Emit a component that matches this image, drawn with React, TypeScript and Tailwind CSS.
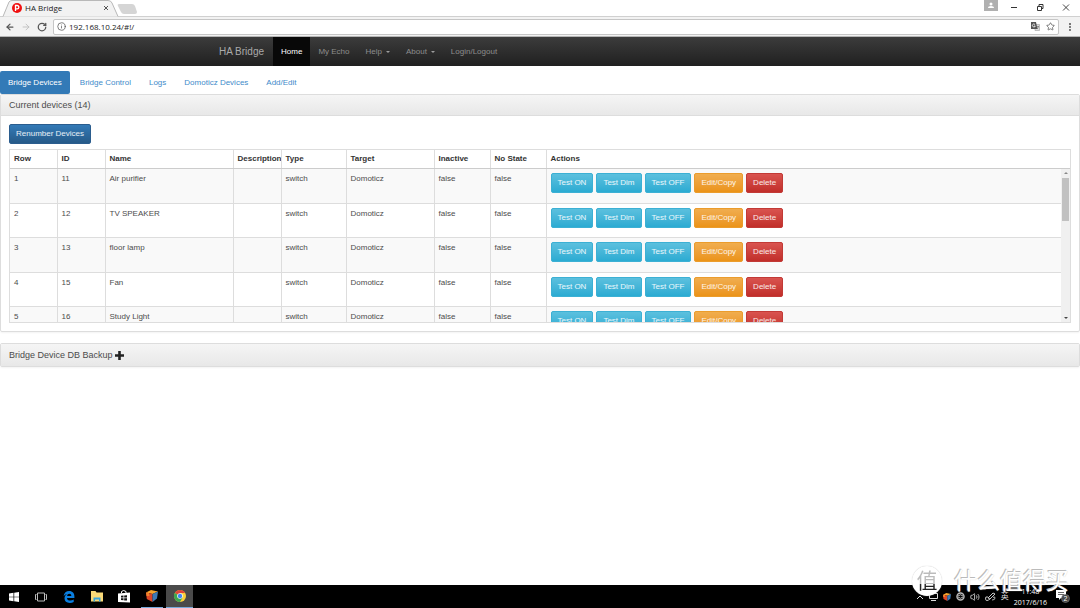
import type { ReactNode } from "react";
import { ArrowLeft, ArrowRight, Info, MoreVertical, RotateCw, Star, Volume2 } from "lucide-react";

const devices = [
  { id: 11, name: "Air purifier" },
  { id: 12, name: "TV SPEAKER" },
  { id: 13, name: "floor lamp" },
  { id: 15, name: "Fan" },
  { id: 16, name: "Study Light" },
];

const columns = [
  { label: "Row", width: "w-[47px]" },
  { label: "ID", width: "w-12" },
  { label: "Name", width: "w-32" },
  { label: "Description", width: "w-12" },
  { label: "Type", width: "w-[65px]" },
  { label: "Target", width: "w-[88px]" },
  { label: "Inactive", width: "w-14" },
  { label: "No State", width: "w-14" },
  { label: "Actions", width: "" },
];

const info = "border-[#3cb0d4] from-[#5bc0de] to-[#2aabd2]";
const actions = [
  { label: "Test ON", look: info },
  { label: "Test Dim", look: info },
  { label: "Test OFF", look: info },
  { label: "Edit/Copy", look: "border-[#eb9c2c] from-[#f0ad4e] to-[#eb9316]" },
  { label: "Delete", look: "border-[#c23a36] from-[#d9534f] to-[#c12e2a]" },
];

function Button({ look, children }: { look: string; children: ReactNode }) {
  return (
    <button type="button" className={`h-5 shrink-0 rounded-[2px] border bg-linear-to-b px-[6px] text-white/90 ${look}`}>
      {children}
    </button>
  );
}

function Browser() {
  return (
    <header className="font-['Open_Sans','Noto_Sans',sans-serif] text-[8px] text-[#222]">
      <div className="relative flex h-4 items-end bg-white">
        <svg className="absolute left-0 top-0" width="140" height="17" viewBox="0 0 140 17">
          <path d="M3 16.5 9 2Q10 .5 12 .5H108Q111 .5 112 3L118 16.5" fill="#f2f2f2" stroke="#b8b8b8" />
          <path d="M119 4H132Q134 4 135 6L137 12Q137 14 135 14H124Q122 14 121 12L118 6Q117 4 119 4" fill="#d5d5d5" />
        </svg>
        <div className="relative flex h-4 w-28 items-center gap-[3px] pl-3">
          <svg width="10" height="10" viewBox="0 0 10 10">
            <circle cx="5" cy="5" r="5" fill="#f01010" />
            <path d="M3.5 8V2.5H5.2a1.6 1.6 0 0 1 0 3.3H3.7" fill="none" stroke="#fff" strokeWidth="1.3" />
          </svg>
          <span className="grow">HA Bridge</span>
          <button type="button" aria-label="Close tab" className="mr-[3px]">
            <svg width="6" height="6" viewBox="0 0 6 6" stroke="#555">
              <path d="M1 1 5 5M5 1 1 5" />
            </svg>
          </button>
        </div>
        <div className="ml-auto flex h-4 items-start">
          <button type="button" aria-label="Profile" className="mr-3 flex h-[11px] w-[14px] items-center justify-center bg-[#b0b0b0]">
            <svg width="6" height="7" viewBox="0 0 6 7" fill="#fff">
              <circle cx="3" cy="2" r="1.5" />
              <path d="M0 6Q0 4 3 4T6 6Z" />
            </svg>
          </button>
          <svg className="mt-[3px]" width="70" height="9" viewBox="0 0 70 9" fill="none" stroke="#333">
            <path d="M1 4.5H7" />
            <path d="M27.500 3.500H31.500V7.500H27.500ZM29 3V1.500H33V5.500H32" />
            <path d="M53 1.500 59 7.500M59 1.500 53 7.500" strokeWidth=".9" />
          </svg>
        </div>
      </div>
      <div className="flex h-[21px] items-center gap-[6px] border-b border-[#b5b5b5] border-t border-t-[#d0d0d0] bg-[#f2f2f2] px-[5px]">
        <button type="button" aria-label="Back"><ArrowLeft size={10} strokeWidth={3} color="#555" /></button>
        <button type="button" aria-label="Forward"><ArrowRight size={10} strokeWidth={2} color="#bbb" /></button>
        <button type="button" aria-label="Reload"><RotateCw size={10} strokeWidth={3} color="#555" /></button>
        <div className="flex h-4 grow items-center gap-[3px] rounded-[2px] border border-[#c6c6c6] bg-white px-[3px]">
          <Info size={9} color="#555" />
          <input aria-label="Address" className="min-w-0 grow outline-none" defaultValue="192.168.10.24/#!/" />
          <svg width="9" height="9" viewBox="0 0 9 9" fill="none">
            <path d="M4 2.500H8.500V8.500H4Z" fill="#ddd" stroke="#aaa" strokeWidth=".7" />
            <path d="M0 0H5L6.500 7H0Z" fill="#555" />
            <path d="M4 2.500A1.500 1.500 0 1 0 4.300 4H3" stroke="#fff" strokeWidth=".8" />
            <path d="M5.800 4.500H8M7.500 4.500 6.300 7" stroke="#666" strokeWidth=".6" />
          </svg>
          <Star size={9} color="#555" strokeWidth={2} className="ml-[3px]" />
        </div>
        <button type="button" aria-label="Menu"><MoreVertical size={10} color="#555" strokeWidth={3} /></button>
      </div>
    </header>
  );
}

function Caret() {
  return <span className="ml-1 mt-px inline-block border-x-2 border-t-2 border-x-transparent border-t-[#9d9d9d] align-middle" />;
}

function Navbar() {
  return (
    <nav className="flex h-[29px] items-center bg-linear-to-b from-[#3c3c3c] to-[#202020] pl-[219px] text-[#8d8d8d]">
      <a href="#home" className="mr-[9px] text-[10px] text-[#aaa]">HA Bridge</a>
      <a href="#home" className="flex h-full items-center bg-[#080808] px-2 text-white">Home</a>
      <a href="#echo" className="px-2">My Echo</a>
      <a href="#help" className="px-2">Help<Caret /></a>
      <a href="#about" className="px-2">About<Caret /></a>
      <a href="#login" className="px-2">Login/Logout</a>
    </nav>
  );
}

function DeviceTable() {
  return (
    <div className="relative mt-[5px] border border-[#ddd]">
      <table className="block w-full text-left">
        <thead className="block border-b border-[#ccc] text-[#333]">
          <tr className="table h-[18px] w-full table-fixed">
            {columns.map((c) => (
              <th key={c.label} className={`overflow-hidden border-l border-[#ddd] pl-1 first:border-l-0 ${c.width}`}>
                {c.label}
              </th>
            ))}
          </tr>
        </thead>
        <tbody className="block h-[153px] overflow-hidden">
          {devices.map((d, i) => (
            <tr key={d.id} className="table w-full table-fixed odd:bg-[#f9f9f9]">
              {[i + 1, d.id, d.name, "", "switch", "Domoticz", "false", "false"].map((value, n) => (
                <td key={n} className={`h-[34px] border-b border-l border-[#ddd] pl-1 pt-1 align-top first:border-l-0 ${columns[n].width}`}>
                  {value}
                </td>
              ))}
              <td className="border-b border-l border-[#ddd] pl-1 pt-1 align-top">
                <div className="flex gap-[3px]">
                  {actions.map((a) => (
                    <Button key={a.label} look={a.look}>{a.label}</Button>
                  ))}
                </div>
              </td>
            </tr>
          ))}
        </tbody>
      </table>
      {/* Scrollbar */}
      <div className="absolute bottom-0 right-0 top-[19px] flex w-[9px] flex-col items-center bg-[#f0f0f0] py-[3px]">
        <span className="border-x-2 border-b-2 border-x-transparent border-b-[#888]" />
        <span className="mt-1 h-[43px] w-[7px] bg-[#c1c1c1]" />
        <span className="mt-auto border-x-2 border-t-2 border-x-transparent border-t-[#444]" />
      </div>
    </div>
  );
}

function Cube({ size }: { size: number }) {
  return (
    <svg width={size} height={size} viewBox="0 0 12 12">
      <path d="M0 2.500 5 0 12 1.500 6.500 4Z" fill="#f6a52c" />
      <path d="M0 2.500 6.500 4V12L.8 9Z" fill="#dc4626" />
      <path d="M0 2.500 3 3.200 3.500 6 .5 6Z" fill="#f0802c" />
      <path d="M6.500 4 12 1.500 11 8.500 6.500 12Z" fill="#3d79b4" />
    </svg>
  );
}

function Apps() {
  return (
    <div className="flex h-full items-stretch">
      <button type="button" aria-label="Start" className="flex w-[27px] items-center justify-center">
        <svg width="10" height="10" viewBox="0 0 10 10" fill="#fff">
          <path d="M0 1.500 4.500.8V4.700H0ZM5.200.7 10 0V4.700H5.200ZM0 5.300H4.500V9.200L0 8.500ZM5.200 5.300H10V10L5.200 9.300Z" />
        </svg>
      </button>
      <button type="button" aria-label="Task view" className="flex w-[27px] items-center justify-center">
        <svg width="12" height="10" viewBox="0 0 12 10" fill="none" stroke="#bbb">
          <path d="M2.500 1H9.500V9H2.500ZM1.500 2.500H.5V7.500H1.500M10.500 2.500H11.500V7.500H10.500" />
        </svg>
      </button>
      <button type="button" aria-label="Edge" className="flex w-[30px] items-center justify-center">
        <svg width="12" height="12" viewBox="0 0 12 12" fill="#0a7fe0">
          <path d="M.6 5.300C1 2 3.300.1 6.200.1 9.500.1 11.400 2.400 11.400 5.500V6.900H4C4.100 8.800 5.500 9.500 7.200 9.500 8.600 9.500 9.800 9.100 10.700 8.500V11C9.600 11.600 8.300 11.900 6.800 11.900 3.400 11.900 1.500 10 1.500 7.200 1.500 5.300 2.500 3.800 4.200 2.900 2.700 3.100 1.400 4 .6 5.300ZM4.100 4.900H8.300C8.300 3.600 7.600 2.800 6.300 2.800 5.100 2.800 4.300 3.700 4.100 4.900Z" />
        </svg>
      </button>
      <button type="button" aria-label="File Explorer" className="flex w-[26px] items-center justify-center">
        <svg width="12" height="11" viewBox="0 0 12 11">
          <path d="M0 0H4.500L5.500 1.500H12V10.500H0Z" fill="#f9d978" />
          <path d="M2.500 10.500V6.500H9.500V10.500H8V8.500H4V10.500Z" fill="#39a5dc" />
        </svg>
      </button>
      <button type="button" aria-label="Store" className="flex w-7 items-center justify-center">
        <svg width="12" height="13" viewBox="0 0 12 13" fill="#fff">
          <path d="M0 3.500 12 2.500V12.500L0 12Z" />
          <path d="M3.500 3V1.500Q5.500-.5 8 1.500V3" fill="none" stroke="#fff" />
          <path d="M3 5.700 5.500 5.500V7.500H3ZM6.200 5.400 9 5.200V7.500H6.200ZM3 8.200H5.500V10.300L3 10.100ZM6.200 8.200H9V10.600L6.200 10.400Z" fill="#111" />
        </svg>
      </button>
      <button type="button" aria-label="Cube" className="mx-[3px] flex w-[22px] items-center justify-center border-b border-[#76a9dc]">
        <Cube size={12} />
      </button>
      <button type="button" aria-label="Chrome" className="flex w-[27px] items-center justify-center border-b border-[#76a9dc] bg-[#4a4a4a]">
        <svg width="12" height="12" viewBox="0 0 12 12">
          <circle cx="6" cy="6" r="6" fill="#fbd038" />
          <path d="M6 6 .8 3A6 6 0 0 1 11.200 3H6Z" fill="#e0443a" />
          <path d="M6 6 .8 3A6 6 0 0 0 6 12L8.600 7.500Z" fill="#3da650" />
          <circle cx="6" cy="6" r="2.800" fill="#fff" />
          <circle cx="6" cy="6" r="2.200" fill="#4285f4" />
        </svg>
      </button>
    </div>
  );
}

function Tray() {
  return (
    <div className="ml-auto flex h-full items-center gap-[5px] text-[#ddd]">
      <svg width="8" height="8" viewBox="0 0 8 8" fill="none" stroke="currentColor"><path d="M1 6 4 3 7 6" /></svg>
      <svg width="9" height="8" viewBox="0 0 9 8" fill="none" stroke="currentColor"><path d="M.5.5H8.500V5.500H.5ZM2 7.500H7" /></svg>
      <Cube size={8} />
      <svg width="9" height="9" viewBox="0 0 9 9" fill="none" stroke="#bbb">
        <circle cx="4.500" cy="4.500" r="3.500" strokeWidth="1.500" />
        <path d="M2 4Q4.500 1.500 7 4M2 5Q4.500 7.500 7 5" />
      </svg>
      <Volume2 size={10} />
      <svg width="11" height="9" viewBox="0 0 11 9" fill="none" stroke="currentColor">
        <path d="M3 6 8 1 10 2 5 7ZM3 5Q0 4 .5 7T3.500 8L5 7" strokeWidth=".9" />
        <path d="M8 5.500Q10 4 10 6T7 8" strokeWidth=".8" />
      </svg>
      <span>英</span>
      <time className="flex flex-col items-center font-['Open_Sans','Noto_Sans',sans-serif] text-[7px] leading-[11px] text-white">
        <span>11:48</span>
        <span>2017/6/16</span>
      </time>
      <button type="button" aria-label="Notifications" className="ml-1 mr-[10px]">
        <svg width="14" height="13" viewBox="0 0 14 13">
          <path d="M0 0H10V8H5L3 10V8H0Z" fill="#fff" />
          <path d="M2 2.500H8M2 4.500H8" stroke="#444" strokeWidth=".8" />
          <circle cx="9.500" cy="8.500" r="4" fill="#444" stroke="#888" strokeWidth=".6" />
          <text x="7.600" y="11" fontSize="7" fill="#fff">2</text>
        </svg>
      </button>
    </div>
  );
}

function Watermark() {
  return (
    <div className="pointer-events-none absolute bottom-3 right-[11px] flex items-center gap-3 text-[23px] leading-[30px] text-white">
      <span className="flex size-[30px] items-center justify-center rounded-full bg-white shadow-[0_0_1px_#bbb]">
        <span className="bg-linear-to-b from-[#bbb] from-60% to-[#222] to-60% bg-clip-text text-[21px] text-transparent">值</span>
      </span>
      <span className="[text-shadow:-1px_-1px_0_#bbb,0_0_1px_#ccc]">什么值得买</span>
    </div>
  );
}

export default function App() {
  return (
    <div className="flex min-h-screen flex-col bg-white font-['Liberation_Sans','Noto_Sans_CJK_SC',sans-serif] text-[8px] leading-3 text-[#4c4c4c]">
      <Browser />
      <Navbar />
      <main className="grow">
        <nav className="mt-[5px] flex h-[23px] items-stretch gap-[2px] text-[#428bca]">
          <a href="#devices" className="flex items-center rounded-[2px] bg-[#337ab7] px-2 text-white">Bridge Devices</a>
          {["Bridge Control", "Logs", "Domoticz Devices", "Add/Edit"].map((t) => (
            <a key={t} href="#tab" className="flex items-center px-2">{t}</a>
          ))}
        </nav>
        <section className="rounded-[2px] border border-[#ddd] shadow-xs">
          <h2 className="flex h-[21px] items-center border-b border-[#ddd] bg-linear-to-b from-[#f5f5f5] to-[#e8e8e8] px-2 text-[9px]">Current devices (14)</h2>
          <div className="p-2">
            <Button look="border-[#2b5d8e] from-[#337ab7] to-[#265a88]">Renumber Devices</Button>
            <DeviceTable />
          </div>
        </section>
        <section className="mt-[11px] rounded-[2px] border border-[#ddd] shadow-xs">
          <h2 className="flex h-[22px] items-center gap-[2px] bg-linear-to-b from-[#f5f5f5] to-[#e8e8e8] px-2 text-[9px]">
            Bridge Device DB Backup
            <svg width="9" height="9" viewBox="0 0 9 9" fill="#222">
              <path d="M3.200 0H5.800V3.200H9V5.800H5.800V9H3.200V5.800H0V3.200H3.200Z" />
            </svg>
          </h2>
        </section>
      </main>
      <footer className="relative flex h-[23px] items-center bg-black">
        <Apps />
        <Tray />
        <Watermark />
      </footer>
    </div>
  );
}
